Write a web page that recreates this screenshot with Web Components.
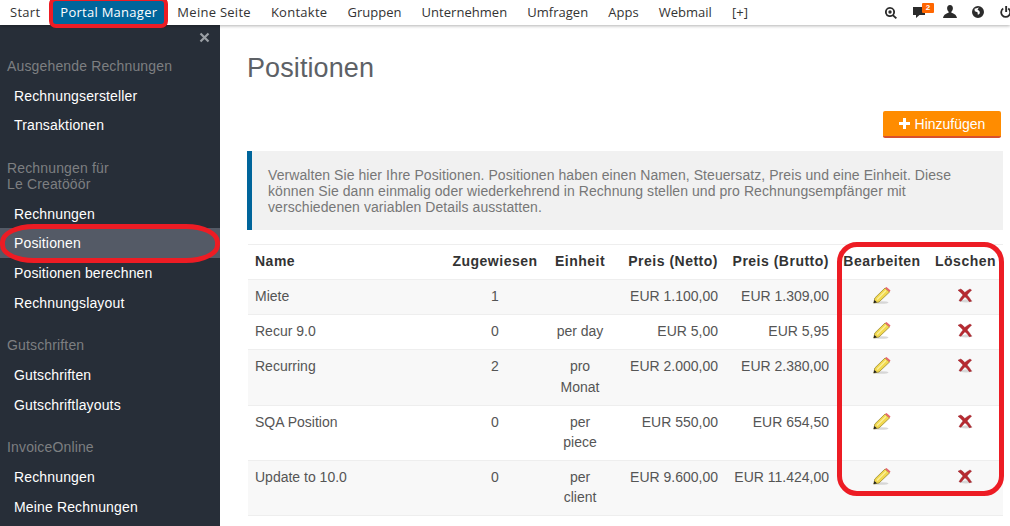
<!DOCTYPE html>
<html lang="de">
<head>
<meta charset="utf-8">
<title>Positionen</title>
<style>
  html, body { margin: 0; height: 100%; overflow: hidden; background: #fff; }
  body { font-family: "Liberation Sans", Arial, sans-serif; font-size: 14px; }
</style>
</head>
<body>
<app-shell>
  <top-bar slot="top">
    <top-link>Start</top-link>
    <top-link active>Portal Manager</top-link>
    <top-link>Meine Seite</top-link>
    <top-link>Kontakte</top-link>
    <top-link tight>Gruppen</top-link>
    <top-link tight>Unternehmen</top-link>
    <top-link tight>Umfragen</top-link>
    <top-link tight>Apps</top-link>
    <top-link tight>Webmail</top-link>
    <top-link tight>[+]</top-link>
    <top-tools slot="tools"></top-tools>
  </top-bar>
  <side-menu slot="side">
    <side-group label="Ausgehende Rechnungen">
      <side-link>Rechnungsersteller</side-link>
      <side-link>Transaktionen</side-link>
    </side-group>
    <side-group label="Rechnungen für<br>Le Creatööör">
      <side-link>Rechnungen</side-link>
      <side-link active>Positionen</side-link>
      <side-link>Positionen berechnen</side-link>
      <side-link>Rechnungslayout</side-link>
    </side-group>
    <side-group label="Gutschriften">
      <side-link>Gutschriften</side-link>
      <side-link>Gutschriftlayouts</side-link>
    </side-group>
    <side-group label="InvoiceOnline">
      <side-link>Rechnungen</side-link>
      <side-link>Meine Rechnungen</side-link>
    </side-group>
  </side-menu>
  <positions-page slot="main"></positions-page>
  <red-mark style="left:49px;top:-3px;width:119px;height:31px;--r:7px;--w:4px"></red-mark>
  <red-mark style="left:0;top:224px;width:220px;height:39px;--r:34px / 18px;--w:5px"></red-mark>
  <red-mark style="left:837px;top:242px;width:167px;height:254px;--r:20px;--w:5px"></red-mark>
</app-shell>

<script>
const define = (name, css, html) => {
  customElements.define(name, class extends HTMLElement {
    constructor() {
      super();
      this.attachShadow({ mode: "open" });
    }
    connectedCallback() {
      this.shadowRoot.innerHTML = `<style>${css}</style>${typeof html === "function" ? html(this) : html}`;
    }
  });
};

define("app-shell", `
  :host { display: grid; grid-template-columns: 220px 1fr; grid-template-rows: 25px 501px; width: 1010px; height: 526px; position: relative; overflow: hidden; }
  .top { grid-column: 1 / 3; position: relative; z-index: 2; }
`, `
  <div class="top"><slot name="top"></slot></div>
  <slot name="side"></slot>
  <slot name="main"></slot>
  <slot></slot>
`);

define("top-bar", `
  :host { display: flex; height: 25px; background: #fff; box-shadow: 0 1px 3px rgba(0,0,0,.3); font: 13px/25px "Open Sans", sans-serif; color: #333; }
  nav { display: flex; }
`, `<nav><slot></slot></nav><slot name="tools"></slot>`);

define("top-link", `
  :host { display: block; padding: 0 10px; color: #333; white-space: nowrap; letter-spacing: .27px; }
  :host([tight]) { letter-spacing: .03px; }
  :host([active]) { background: #00659b; color: #fff; }
`, `<slot></slot>`);

define("top-tools", `
  :host { display: block; margin-left: auto; height: 25px; position: relative; width: 126px; overflow: hidden; }
  svg { position: absolute; fill: #2b2b2b; }
  b { position: absolute; left: 38px; top: 3px; width: 12px; height: 10px; background: #f60; color: #fff; border-radius: 1px; font: bold 8px/10px "Liberation Sans", sans-serif; text-align: center; }
`, `
  <svg style="left:1px;top:7px" width="12" height="12" viewBox="0 0 12 12"><path fill-rule="evenodd" d="M5 0a5 5 0 0 1 4 8l3 2.700-1.300 1.300-3-2.800A5 5 0 1 1 5 0zm0 1.800a3.200 3.200 0 1 0 0 6.400 3.200 3.200 0 0 0 0-6.400z"/><circle cx="5" cy="5" r="1.700"/></svg>
  <svg style="left:29px;top:7px" width="12" height="11" viewBox="0 0 12 11"><path d="M0 0h12v8H6.500L3 11V8H0z"/></svg>
  <b>2</b>
  <svg style="left:59px;top:5px" width="14" height="13" viewBox="0 0 14 13"><path d="M7 0c1.900 0 2.900 1.400 2.900 3.300 0 1.500-.7 2.700-1.500 3.400v1.100c1.800.8 4.900 1.400 5.600 5.200H0c.7-3.800 3.800-4.400 5.600-5.200V6.700C4.800 6 4.100 4.800 4.100 3.300 4.100 1.400 5.100 0 7 0z"/></svg>
  <svg style="left:88px;top:6px" width="12" height="12" viewBox="0 0 12 12"><path fill-rule="evenodd" d="M6 0a6 6 0 1 1 0 12A6 6 0 0 1 6 0zM2.500 2.800l.3 2.500 2.700 1 .4 2.700 2-1.800-.4-2L5.500 3.600 7 1.400z"/></svg>
  <svg style="left:116px;top:6px" width="11" height="12" viewBox="0 0 11 12"><path d="M5.200 0h1.900v6H5.200z"/><path fill="none" stroke="#2b2b2b" stroke-width="1.800" d="M3.200 2.600a4.500 4.500 0 1 0 5 0"/></svg>
`);

define("side-menu", `
  :host { display: block; position: relative; background: #272e38; height: 501px; overflow: hidden; padding-top: 33px; box-sizing: border-box; }
  .close { position: absolute; right: 10px; top: 7px; width: 11px; height: 11px; }
`, `
  <svg class="close" viewBox="0 0 11 11"><path d="M1.500 1.500l8 8m0-8l-8 8" stroke="#9a9fa5" stroke-width="2.200"/></svg>
  <slot></slot>
`);

define("side-group", `
  :host { display: block; margin-bottom: 20px; }
  h4 { margin: 0 0 6.650px; padding: 0 7px; font: 14px/16px "Liberation Sans", sans-serif; letter-spacing: .15px; color: #7d7f81; }
`, (el) => `<h4>${el.getAttribute("label")}</h4><slot></slot>`);

define("side-link", `
  :host { display: block; height: 29.700px; padding-left: 14px; font: 14px/30.400px "Liberation Sans", sans-serif; letter-spacing: .15px; color: #fff; }
  :host([active]) { background: #545a66; }
`, `<slot></slot>`);

define("red-mark", `
  :host { position: absolute; box-sizing: border-box; border: var(--w) solid #ed1c24; border-radius: var(--r); z-index: 5; pointer-events: none; }
`, ``);

define("orange-button", `
  :host { display: inline-flex; align-items: center; justify-content: center; gap: 5px; box-sizing: border-box; width: 118px; height: 27px; background: #ff8c00; border-bottom: 2px solid #d9512c; border-radius: 2px; color: #fff; font: 14px/20px "Liberation Sans", sans-serif; }
  svg { display: block; }
`, `<svg width="11" height="11" viewBox="0 0 11 11"><path fill="#fff" d="M4 0h3v4h4v3H7v4H4V7H0V4h4z"/></svg><slot></slot>`);

define("info-box", `
  :host { display: block; box-sizing: border-box; height: 79px; background: #f1f1f1; border-left: 5px solid #00659b; padding: 16px 16px 0; font: 14px/16px "Liberation Sans", sans-serif; letter-spacing: .07px; color: #777; }
`, `<slot></slot>`);

define("edit-icon", `:host { display: inline-block; width: 18px; height: 17px; margin-top: 1px; vertical-align: top; } svg { display: block; }`, `
  <svg width="18" height="17" viewBox="0 0 18 17">
    <ellipse cx="8" cy="15.500" rx="7.500" ry="1.300" fill="#c8c8c8" opacity=".7"/>
    <path d="M.8 16l1-5L12 1l4.500 4L6 15z" fill="#f2d94f" stroke="#9c8a30" stroke-width=".8"/>
    <path d="M4 12.500l9-9" stroke="#fbf0a0" stroke-width="1.300"/>
    <path d="M12 1l1.500-1 4 3.400L16.500 5z" fill="#e8666c"/>
    <path d="M.6 16.300l.8-3.300 2.600 2.300z" fill="#222"/>
  </svg>`);

define("delete-icon", `:host { display: inline-block; width: 16px; height: 16px; margin: 2px 0 0 -2px; vertical-align: top; } svg { display: block; }`, `
  <svg width="16" height="16" viewBox="0 0 16 16">
    <ellipse cx="9" cy="13" rx="6.500" ry="1.500" fill="#c9c9c9" opacity=".7"/>
    <path d="M1 2.200L3.800 1c1.500 1 2.800 2.100 4 3.500C9.200 3.200 11 2 13 1l1.600 1.200c-1.700 1.300-3.200 3-4.500 4.700 1.700 1.800 3.300 4 4.500 6.300l-2.300.5C11 11.500 9.500 10 8 8.800 6.600 10.200 5.200 11.700 4 13.300l-2-.6C3 10.800 4.500 8.800 6 7 4.500 5.200 2.800 3.500 1 2.200z" fill="#b72a31" stroke="#8e1a20" stroke-width=".4"/>
  </svg>`);

define("positions-table", `
  :host { display: block; }
  table { width: 755px; border-collapse: collapse; table-layout: fixed; font: 14px/20px "Liberation Sans", sans-serif; color: #555; }
  th, td { padding: 6px 7px 8px; border-top: 1px solid #eee; vertical-align: top; }
  th { color: #333; text-align: left; letter-spacing: .5px; white-space: nowrap; }
  tbody tr:nth-child(odd) { background: #f8f8f8; }
  tbody tr:last-child td { border-bottom: 1px solid #eee; }
  .c { text-align: center; }
  .r { text-align: right; }
  .wide { line-height: 21px; padding-bottom: 7px; }
`, `
  <table>
    <colgroup><col style="width:197px"><col style="width:100px"><col style="width:70px"><col style="width:110px"><col style="width:111px"><col style="width:92px"><col style="width:75px"></colgroup>
    <thead><tr><th>Name</th><th class="c">Zugewiesen</th><th class="c">Einheit</th><th class="r">Preis (Netto)</th><th class="r">Preis (Brutto)</th><th class="c">Bearbeiten</th><th class="c">Löschen</th></tr></thead>
    <tbody>
      <tr><td>Miete</td><td class="c">1</td><td class="c"></td><td class="r">EUR 1.100,00</td><td class="r">EUR 1.309,00</td><td class="c"><edit-icon></edit-icon></td><td class="c"><delete-icon></delete-icon></td></tr>
      <tr><td>Recur 9.0</td><td class="c">0</td><td class="c">per day</td><td class="r">EUR 5,00</td><td class="r">EUR 5,95</td><td class="c"><edit-icon></edit-icon></td><td class="c"><delete-icon></delete-icon></td></tr>
      <tr><td>Recurring</td><td class="c">2</td><td class="c wide">pro<br>Monat</td><td class="r">EUR 2.000,00</td><td class="r">EUR 2.380,00</td><td class="c"><edit-icon></edit-icon></td><td class="c"><delete-icon></delete-icon></td></tr>
      <tr><td>SQA Position</td><td class="c">0</td><td class="c">per<br>piece</td><td class="r">EUR 550,00</td><td class="r">EUR 654,50</td><td class="c"><edit-icon></edit-icon></td><td class="c"><delete-icon></delete-icon></td></tr>
      <tr><td>Update to 10.0</td><td class="c">0</td><td class="c">per<br>client</td><td class="r">EUR 9.600,00</td><td class="r">EUR 11.424,00</td><td class="c"><edit-icon></edit-icon></td><td class="c"><delete-icon></delete-icon></td></tr>
    </tbody>
  </table>
`);

define("positions-page", `
  :host { display: block; padding: 28px 7px 0 27px; overflow: hidden; }
  h1 { margin: 0; font: 27px/31px "Liberation Sans", sans-serif; letter-spacing: .1px; color: #5d6166; }
  .actions { display: flex; justify-content: flex-end; margin: 27px 2px 13px 0; }
  positions-table { margin-top: 14px; padding-left: 1px; }
`, `
  <h1>Positionen</h1>
  <div class="actions"><orange-button>Hinzufügen</orange-button></div>
  <info-box>Verwalten Sie hier Ihre Positionen. Positionen haben einen Namen, Steuersatz, Preis und eine Einheit. Diese können Sie dann einmalig oder wiederkehrend in Rechnung stellen und pro Rechnungsempfänger mit verschiedenen variablen Details ausstatten.</info-box>
  <positions-table></positions-table>
`);
</script>
</body>
</html>
